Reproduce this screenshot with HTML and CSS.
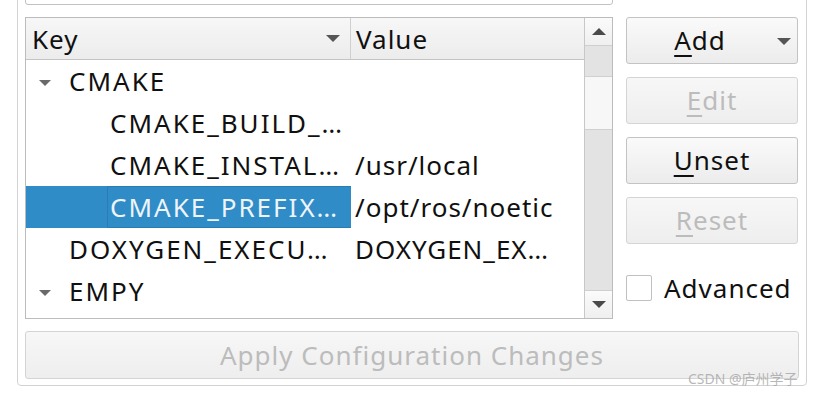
FILE: index.html
```html
<!DOCTYPE html>
<html>
  <head>
    <meta http-equiv="Content-Type" content="text/html; charset=utf-8"/>
    <link rel="stylesheet" href="styles.css">
  </head>
  <body>
    <div class="frame">
      <div class="edit"></div>
      <div class="main">
        <div class="tree">
          <div class="cols">
            <div class="header">
              <div class="hcell key">Key<span class="sort"></span></div>
              <div class="hcell value">Value</div>
            </div>
            <div class="row">
              <div class="cell key"><span class="arrow"></span><span class="name">CMAKE</span></div>
              <div class="cell value"></div>
            </div>
            <div class="row">
              <div class="cell key child"><span class="name">CMAKE_BUILD_…</span></div>
              <div class="cell value"></div>
            </div>
            <div class="row">
              <div class="cell key child"><span class="name">CMAKE_INSTAL…</span></div>
              <div class="cell value">/usr/local</div>
            </div>
            <div class="row selected">
              <div class="cell key child"><span class="name focus">CMAKE_PREFIX…</span></div>
              <div class="cell value">/opt/ros/noetic</div>
            </div>
            <div class="row">
              <div class="cell key top"><span class="name">DOXYGEN_EXECU…</span></div>
              <div class="cell value">DOXYGEN_EX…</div>
            </div>
            <div class="row">
              <div class="cell key"><span class="arrow"></span><span class="name">EMPY</span></div>
              <div class="cell value"></div>
            </div>
          </div>
          <div class="scrollbar">
            <div class="sb-btn"><span class="up"></span></div>
            <div class="sb-track">
              <div class="sb-gap"></div>
              <div class="sb-handle"></div>
              <div class="sb-rest"></div>
            </div>
            <div class="sb-btn bottom"><span class="down"></span></div>
          </div>
        </div>
        <div class="side">
          <div class="button"><span class="label"><u>A</u>dd</span><span class="drop"></span></div>
          <div class="button disabled"><u>E</u>dit</div>
          <div class="button"><u>U</u>nset</div>
          <div class="button disabled"><u>R</u>eset</div>
          <div class="check">
            <span class="box"></span>
            <span>Advanced</span>
          </div>
        </div>
      </div>
      <div class="button apply disabled">Apply Configuration Changes</div>
    </div>
    <div class="mark">CSDN @庐州学子</div>
  </body>
</html>
```
FILE: styles.css
```css
body {
  margin: 0px;
  padding: 0px;
  background: #ffffff;
  font-family: "Noto Sans", "DejaVu Sans", sans-serif;
  font-size: 26px;
  letter-spacing: 1px;
  color: #101010;
  overflow: hidden;
}

.frame {
  margin-top: -30px;
  margin-left: 17px;
  width: 774px;
  padding: 0px 7px 6px 7px;
  border: 1px solid #d2d2d2;
  border-radius: 4px;
}

.edit {
  width: 586px;
  height: 32px;
  border: 1px solid #c2c2c2;
  border-radius: 3px;
}

.main {
  display: flex;
  gap: 13px;
  margin-top: 12px;
  height: 302px;
}

.tree {
  display: flex;
  width: 586px;
  border: 1px solid #bcbcbc;
  overflow: hidden;
}

.cols {
  flex: 1;
  overflow: hidden;
}

.header {
  display: flex;
  height: 41px;
  border-bottom: 1px solid #c4c4c4;
  background: linear-gradient(#f7f7f7, #ececec);
}

.hcell {
  position: relative;
  line-height: 42px;
  padding-left: 6px;
}

.hcell.key {
  width: 318px;
  border-right: 1px solid #d0d0d0;
}

.hcell.value {
  flex: 1;
  padding-left: 5px;
}

.sort {
  position: absolute;
  left: 300px;
  top: 17px;
  border-left: 7px solid transparent;
  border-right: 7px solid transparent;
  border-top: 7px solid #555555;
}

.row {
  display: flex;
  height: 42px;
  line-height: 42px;
}

.cell {
  white-space: nowrap;
  overflow: hidden;
}

.cell.key {
  display: flex;
  align-items: center;
  width: 325px;
  padding-left: 43px;
  box-sizing: border-box;
  position: relative;
  letter-spacing: 2px;
}

.cell.key.child {
  padding-left: 84px;
}

.cell.value {
  flex: 1;
  padding-left: 4px;
}

.arrow {
  position: absolute;
  left: 13px;
  top: 20px;
  border-left: 6px solid transparent;
  border-right: 6px solid transparent;
  border-top: 6px solid #6a6a6a;
}

.name {
  display: block;
  height: 42px;
}

.row.selected .cell.key {
  background: #308cc6;
  color: #eef4fa;
}

.name.focus {
  flex: 1;
  height: 40px;
  line-height: 40px;
  border: 1px solid #2a7db3;
  border-right: none;
  margin-left: -3px;
  padding-left: 2px;
}

.scrollbar {
  display: flex;
  flex-direction: column;
  width: 27px;
  border-left: 1px solid #c8c8c8;
  background: #e3e3e3;
}

.sb-btn {
  height: 27px;
  border-bottom: 1px solid #cfcfcf;
  background: linear-gradient(#fbfbfb, #efefef);
  display: flex;
  align-items: center;
  justify-content: center;
}

.sb-btn.bottom {
  border-bottom: none;
  border-top: 1px solid #cfcfcf;
}

.up {
  border-left: 7px solid transparent;
  border-right: 7px solid transparent;
  border-bottom: 7px solid #4a4a4a;
}

.down {
  border-left: 7px solid transparent;
  border-right: 7px solid transparent;
  border-top: 7px solid #4a4a4a;
}

.sb-track {
  flex: 1;
  display: flex;
  flex-direction: column;
}

.sb-gap {
  height: 30px;
}

.sb-handle {
  height: 52px;
  background: #f7f7f7;
  border-top: 1px solid #d0d0d0;
  border-bottom: 1px solid #d0d0d0;
}

.side {
  display: flex;
  flex-direction: column;
  gap: 13px;
  width: 172px;
}

.button {
  position: relative;
  height: 45px;
  line-height: 45px;
  text-align: center;
  border: 1px solid #c3c3c3;
  border-radius: 3px;
  background: linear-gradient(#fafafa, #ececec);
  white-space: nowrap;
}

.button u {
  text-decoration-thickness: 2px;
  text-underline-offset: 5px;
}

.button.disabled {
  color: #bcbcbc;
  border-color: #d4d4d4;
  background: linear-gradient(#f7f7f7, #eeeeee);
}

.button .label {
  margin-left: -24px;
}

.drop {
  position: absolute;
  right: 6px;
  top: 20px;
  border-left: 7px solid transparent;
  border-right: 7px solid transparent;
  border-top: 7px solid #555555;
}

.check {
  display: flex;
  align-items: center;
  gap: 12px;
  margin-top: 16px;
  height: 30px;
}

.box {
  width: 24px;
  height: 24px;
  border: 1px solid #c0c0c0;
  border-radius: 2px;
  background: #ffffff;
}

.apply {
  margin-top: 12px;
  height: 46px;
  line-height: 46px;
}

.mark {
  position: absolute;
  left: 688px;
  top: 368px;
  font-family: "Noto Sans", "Noto Sans CJK SC", sans-serif;
  font-size: 14px;
  letter-spacing: 0px;
  color: rgba(160, 160, 160, 0.75);
}
```
